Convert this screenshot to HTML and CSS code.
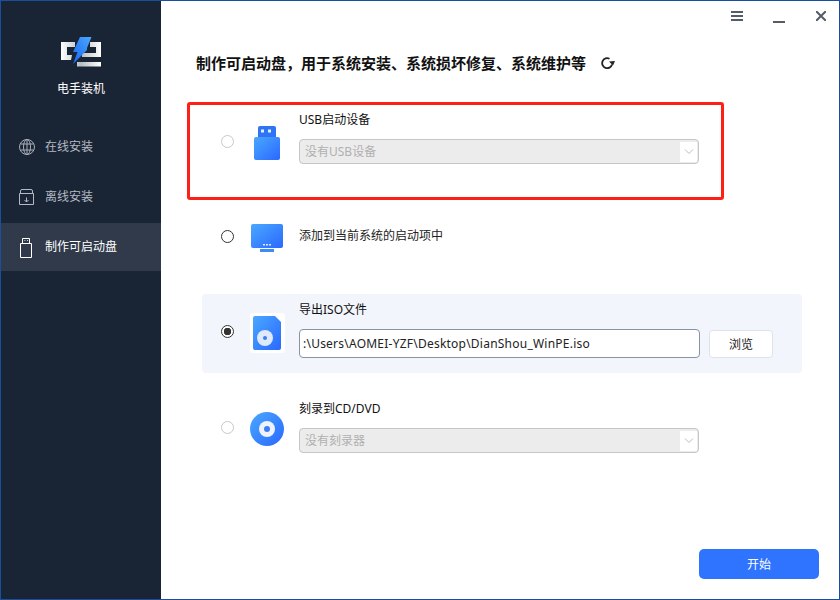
FILE: index.html
```html
<!DOCTYPE html>
<html lang="zh-CN">
<head>
<meta charset="utf-8">
<title>电手装机</title>
<link rel="stylesheet" href="styles.css">
</head>
<body>
<div class="window">
  <aside class="sidebar">
    <div class="brand">
      <svg class="logo" width="42" height="30" viewBox="60 37 42 30">
        <defs>
          <linearGradient id="lw" x1="0" y1="0" x2="1" y2="0"><stop offset="0" stop-color="#fff"/><stop offset=".5" stop-color="#b8bcc2"/><stop offset="1" stop-color="#fff"/></linearGradient>
          <linearGradient id="lb" x1="0" y1="1" x2="1" y2="0"><stop offset="0" stop-color="#1a66f0"/><stop offset="1" stop-color="#4aa8ff"/></linearGradient>
        </defs>
        <path fill="url(#lw)" d="M61 42h14v5h-8v8h5l-1 5h-10zM90 42h11v15H82v-4h14v-6h-6zM77 62h24v4.500H77z"/>
        <path fill="url(#lb)" d="M80 37h11.500L87 48v2L73 64l4.500-12H73z"/>
      </svg>
      <div class="brand-name">电手装机</div>
    </div>
    <nav class="nav">
      <div class="nav-item">
        <svg class="nav-icon" width="16" height="16" viewBox="0 0 16 16" fill="none" stroke="#a9afb8" stroke-width="1"><circle cx="8" cy="8" r="7.500"/><ellipse cx="8" cy="8" rx="3.500" ry="7.500"/><path d="M1.500 5h13M1.500 11h13M8 .5v15"/></svg>
        <span>在线安装</span>
      </div>
      <div class="nav-item">
        <svg class="nav-icon" width="16" height="16" viewBox="0 0 16 16" fill="none" stroke="#b4bac3" stroke-width="1"><path d="M.5 4.500v11h14v-11zM1.500 4.500V2a1.500 1.500 0 0 1 1.500-1.500h9A1.500 1.500 0 0 1 13.500 2v2.500M7.500 8.500v4.500M5.500 11l2 2 2-2"/></svg>
        <span>离线安装</span>
      </div>
      <div class="nav-item active">
        <svg class="nav-icon" width="16" height="22" viewBox="0 0 16 22" fill="none" stroke="#fff" stroke-width="1"><path d="M1.500 7.500h11v14h-11zM3.500 7.500v-5h7v5M5.500 4.500h.8M8 4.500h.8"/></svg>
        <span>制作可启动盘</span>
      </div>
    </nav>
  </aside>
  <main class="main">
    <header class="titlebar">
      <svg class="tb-btn" width="12" height="10" viewBox="0 0 12 10" fill="#555c66"><path d="M0 0h12v2H0zM0 4h12v2H0zM0 8h12v2H0z"/></svg>
      <span class="tb-min"></span>
      <svg class="tb-btn" width="10" height="10" viewBox="0 0 10 10" stroke="#555c66" stroke-width="2"><path d="M0 0l10 10M10 0L0 10"/></svg>
    </header>
    <div class="heading">
      <h1>制作可启动盘，用于系统安装、系统损坏修复、系统维护等</h1>
      <svg class="refresh" width="14" height="14" viewBox="0 0 14 14" fill="none" stroke="#222" stroke-width="1.800"><path d="M11 8.500A5 5 0 1 1 8.500 2.700"/><path fill="#222" stroke="none" d="M8 5.500l6-.5-2 4.500z"/></svg>
    </div>
    <div class="options">
      <div class="row row-usb">
        <span class="radio disabled"></span>
        <svg class="opt-icon" width="36" height="36" viewBox="0 0 36 36">
          <defs>
            <linearGradient id="g1" x1="0" y1="0" x2="1" y2="1"><stop offset="0" stop-color="#4aa8ff"/><stop offset="1" stop-color="#2a68ff"/></linearGradient>
          </defs>
          <path fill="#2f74f5" d="M8 3a2 2 0 0 1 2-2h14a2 2 0 0 1 2 2v10H8z"/>
          <rect x="11" y="4.500" width="3" height="3" fill="#e6efff"/><rect x="18" y="4.500" width="3" height="3" fill="#e6efff" />
          <rect x="4" y="12" width="26" height="23" rx="2" fill="url(#g1)"/>
        </svg>
        <div class="content">
          <label class="label">USB启动设备</label>
          <div class="select"><span>没有USB设备</span><i class="arrow"><svg width="10" height="6" viewBox="0 0 10 6" fill="none" stroke="#bbb"><path d="M1 .5l4 4 4-4"/></svg></i></div>
        </div>
      </div>
      <div class="row row-simple">
        <span class="radio"></span>
        <svg class="opt-icon" width="36" height="36" viewBox="0 0 36 36">
          <rect x="1" y="1" width="32" height="24" rx="2" fill="url(#g1)"/>
          <rect x="10" y="26" width="14" height="3" fill="#3c8cf5"/>
          <path fill="#dfeaff" d="M13 21h2v1.500h-2zM16 21h2v1.500h-2zM19 21h2v1.500h-2z"/>
        </svg>
        <div class="label single">添加到当前系统的启动项中</div>
      </div>
      <div class="row row-iso">
        <span class="radio checked"></span>
        <svg class="opt-icon" width="36" height="40" viewBox="0 0 36 40">
          <rect x="0" y="0" width="35" height="40" rx="3" fill="#fff"/>
          <path fill="url(#g1)" d="M3 5a2 2 0 0 1 2-2h20l6 6v26a2 2 0 0 1-2 2H5a2 2 0 0 1-2-2z"/>
          <circle cx="15" cy="25" r="8" fill="#dfe9fa"/><circle cx="15" cy="25" r="2" fill="#3c7df5"/>
        </svg>
        <div class="content">
          <label class="label">导出ISO文件</label>
          <div class="path-line">
            <div class="input">:\Users\AOMEI-YZF\Desktop\DianShou_WinPE.iso</div>
            <button class="browse">浏览</button>
          </div>
        </div>
      </div>
      <div class="row row-cd">
        <span class="radio disabled"></span>
        <svg class="opt-icon" width="36" height="36" viewBox="0 0 36 36">
          <circle cx="17" cy="17" r="17" fill="url(#g1)"/><circle cx="17" cy="17" r="8" fill="#eef3fb"/><circle cx="17" cy="17" r="3" fill="#3c7df5"/>
        </svg>
        <div class="content">
          <label class="label">刻录到CD/DVD</label>
          <div class="select"><span>没有刻录器</span><i class="arrow"><svg width="10" height="6" viewBox="0 0 10 6" fill="none" stroke="#bbb"><path d="M1 .5l4 4 4-4"/></svg></i></div>
        </div>
      </div>
    </div>
    <div class="actions"><button class="start">开始</button></div>
  </main>
  <div class="highlight"></div>
</div>
</body>
</html>
```

FILE: styles.css
```css
* { box-sizing: border-box; }
html, body { margin: 0; padding: 0; }
body {
  width: 840px;
  height: 600px;
  overflow: hidden;
  background: #fff;
  font-family: "Noto Sans", "Noto Sans CJK SC", sans-serif;
  font-size: 12px;
  color: #222;
}
.window {
  position: relative;
  display: flex;
  width: 840px;
  height: 600px;
  border: 1px solid #1a4f9f;
  background: #fff;
}
.sidebar {
  width: 160px;
  flex: none;
  background: #192434;
  display: flex;
  flex-direction: column;
}
.brand {
  display: flex;
  flex-direction: column;
  align-items: center;
  padding-top: 36px;
}
.logo { display: block; }
.brand-name {
  margin-top: 13px;
  color: #fff;
  line-height: 18px;
}
.nav {
  display: flex;
  flex-direction: column;
  margin-top: 25px;
  gap: 2px;
}
.nav-item {
  height: 48px;
  display: flex;
  align-items: center;
  color: #b4bac3;
  padding-left: 18px;
  gap: 10px;
}
.nav-item span { margin-bottom: 2px; }
.nav-icon { flex: none; }
.nav-item.active { background: #303a4a; color: #fff; }
.main {
  flex: 1;
  display: flex;
  flex-direction: column;
  min-width: 0;
}
.titlebar {
  display: flex;
  justify-content: flex-end;
  align-items: flex-start;
  padding: 10px 13px 0 0;
  height: 44px;
  gap: 30px;
}
.tb-btn { display: block; flex: none; }
.tb-min {
  width: 12px;
  height: 2px;
  margin: 10px 1px 0 0;
  background: #555c66;
}
.heading {
  display: flex;
  align-items: center;
  padding-left: 35px;
  height: 35px;
  gap: 15px;
}
.heading h1 {
  margin: 0;
  font-size: 15px;
  font-weight: 700;
  color: #111;
  line-height: 22px;
}
.options {
  margin: 22px 0 0 41px;
  width: 600px;
  display: flex;
  flex-direction: column;
  gap: 19px;
}
.row {
  display: flex;
  align-items: flex-start;
  height: 79px;
  padding-left: 19px;
  border-radius: 4px;
}
.row-simple { height: 75px; }
.row-iso { background: #f2f5fb; }
.radio {
  width: 13px;
  height: 13px;
  flex: none;
  border: 1px solid #333;
  border-radius: 50%;
  background: #fff;
  margin-right: 16px;
}
.radio.disabled { border-color: #c8c8c8; }
.radio.checked {
  background: radial-gradient(circle, #333 3.500px, #fff 4px);
}
.opt-icon { flex: none; display: block; margin-right: 13px; }
.content {
  width: 474px;
  flex: none;
  display: flex;
  flex-direction: column;
}
.row-usb .radio { margin-top: 33px; }
.row-usb .opt-icon { margin-top: 23px; }
.row-usb .content { margin-top: 9px; }
.row-simple .radio { margin-top: 30px; }
.row-simple .opt-icon { margin-top: 23px; }
.row-simple .label { margin-top: 27px; }
.row-iso .radio { margin-top: 31px; }
.row-iso .opt-icon { margin-top: 19px; }
.row-iso .content { margin-top: 7px; }
.row-cd .radio { margin-top: 29px; }
.row-cd .opt-icon { margin-top: 20px; }
.row-cd .content { margin-top: 8px; }
.label {
  display: block;
  line-height: 18px;
  color: #111;
}
.single { color: #222; }
.select {
  margin-top: 10px;
  width: 400px;
  height: 25px;
  border: 1px solid #c6c6c6;
  border-radius: 4px;
  background: #ececec;
  display: flex;
  align-items: center;
  justify-content: space-between;
  padding: 1px 1px 1px 5px;
  color: #b0b0b0;
}
.select span { margin-bottom: 2px; }
.arrow {
  width: 17px;
  height: 20px;
  background: #fff;
  display: flex;
  align-items: center;
  justify-content: center;
}
.path-line {
  margin-top: 10px;
  display: flex;
  align-items: flex-end;
  gap: 9px;
}
.input {
  width: 401px;
  height: 29px;
  border: 1px solid #8a93a3;
  border-radius: 4px;
  background: #fff;
  padding-left: 3px;
  line-height: 27px;
  letter-spacing: .23px;
  color: #222;
  white-space: nowrap;
  overflow: hidden;
}
.browse {
  width: 64px;
  height: 28px;
  border: 1px solid #dde3ec;
  border-radius: 4px;
  background: #fff;
  font: inherit;
  color: #222;
  padding: 0;
}
.actions {
  margin-top: auto;
  display: flex;
  justify-content: flex-end;
  padding: 0 20px 20px 0;
}
.start {
  width: 120px;
  height: 30px;
  border: 0;
  border-radius: 5px;
  background: #2f74ff;
  color: #fff;
  font: inherit;
  padding: 0;
}
.highlight {
  position: absolute;
  left: 186px;
  top: 101px;
  width: 537px;
  height: 98px;
  border: 3px solid #ff2015;
  border-radius: 3px;
  pointer-events: none;
}
```
